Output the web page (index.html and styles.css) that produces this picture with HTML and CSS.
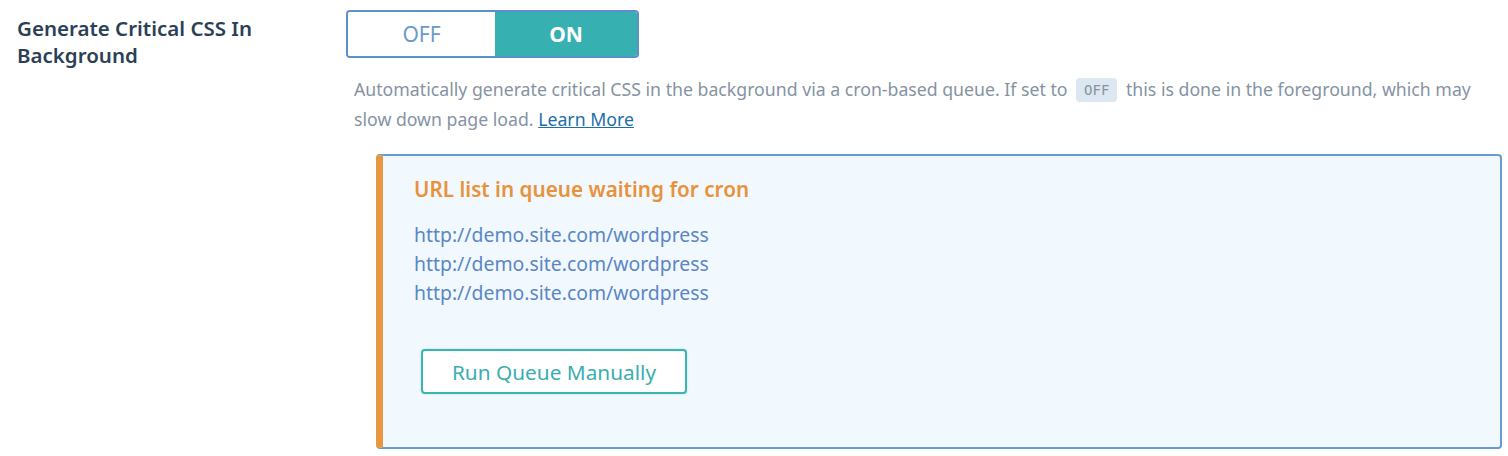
FILE: index.html
```html
<!DOCTYPE html>
<html>
<head>
<meta charset="utf-8">
<link rel="stylesheet" href="styles.css">
</head>
<body>
<div class="setting">
  <div class="label">Generate Critical CSS In Background</div>
  <div class="control">
    <div class="toggle">
      <span class="opt off">OFF</span>
      <span class="opt on">ON</span>
    </div>
    <p class="desc">Automatically generate critical CSS in the background via a cron-based queue. If set to <code>OFF</code> this is done in the foreground, which may slow down page load. <a href="#">Learn More</a></p>
    <div class="queue">
      <div class="queue-title">URL list in queue waiting for cron</div>
      <ul class="urls">
        <li>http://demo.site.com/wordpress</li>
        <li>http://demo.site.com/wordpress</li>
        <li>http://demo.site.com/wordpress</li>
      </ul>
      <button class="run">Run Queue Manually</button>
    </div>
  </div>
</div>
</body>
</html>
```

FILE: styles.css
```css
html, body {
  margin: 0;
  padding: 0;
  background: #fff;
  font-family: "Noto Sans", "Open Sans", sans-serif;
}
.setting {
  display: flex;
}
.label {
  flex: none;
  width: 329px;
  padding: 15px 0 0 17px;
  font-size: 20.5px;
  line-height: 27px;
  font-weight: 600;
  color: #2b3f57;
}
.control {
  flex: 1;
  padding-top: 10px;
  padding-right: 6px;
}
.toggle {
  display: flex;
  width: 293px;
  height: 48px;
  box-sizing: border-box;
  border: 2px solid #5d8fcc;
  border-radius: 4px;
  overflow: hidden;
}
.opt {
  display: flex;
  align-items: center;
  justify-content: center;
  font-size: 21px;
}
.off {
  width: 147px;
  color: #6d98cc;
  background: #fff;
}
.on {
  flex: 1;
  background: #37b0b1;
  color: #fff;
  font-weight: 700;
}
.desc {
  margin: 16px 0 0 8px;
  font-size: 17.7px;
  line-height: 30px;
  color: #8593a3;
}
.desc code {
  display: inline-block;
  font-family: "DejaVu Sans Mono", monospace;
  font-size: 14px;
  line-height: 24px;
  background: #dde7f2;
  color: #8593a3;
  border-radius: 4px;
  padding: 0 8px;
  margin: 0 4px;
  vertical-align: 1px;
}
.desc a {
  color: #1d6ea8;
  text-decoration: underline;
}
.queue {
  margin: 20px 0 0 30px;
  background: #f1f8fe;
  border: 2px solid #6a9bd0;
  border-left: 7px solid #e8963f;
  border-radius: 4px;
  padding: 19px 20px 53px 31px;
}
.queue-title {
  font-size: 20.7px;
  line-height: 28px;
  font-weight: 600;
  color: #e8923c;
}
.urls {
  list-style: none;
  margin: 17px 0 0;
  padding: 0;
  font-size: 19.4px;
  line-height: 29px;
  color: #5b87c5;
}
.run {
  margin: 42px 0 0 7px;
  width: 266px;
  height: 45px;
  background: #fff;
  border: 2px solid #3ab5b0;
  border-radius: 4px;
  color: #3aaeb0;
  font-family: "Noto Sans", "Open Sans", sans-serif;
  font-size: 20.8px;
  box-shadow: 0 0 2px rgba(58, 181, 176, 0.4);
  cursor: pointer;
}
```
